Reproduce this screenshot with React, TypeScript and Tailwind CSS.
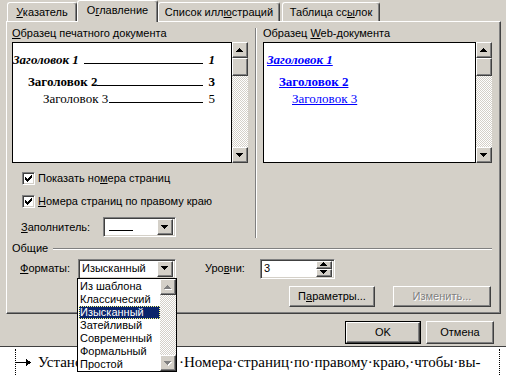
import React from 'react';

// classic win2k bevels
const raised =
  'bg-[#d4d0c8] border border-t-white border-l-white border-b-[#404040] border-r-[#404040] shadow-[inset_-1px_-1px_#808080]';
const sunken =
  'bg-white border border-t-[#808080] border-l-[#808080] border-b-white border-r-white shadow-[inset_1px_1px_#404040,inset_-1px_-1px_#d4d0c8]';
const checker = 'bg-[repeating-conic-gradient(#ffffff_0_25%,#d4d0c8_0_50%)] bg-size-[2px_2px]';

function Arrow({ dir, disabled }: { dir: 'up' | 'down'; disabled?: boolean }) {
  const rows = dir === 'up' ? [[3, 1], [2, 3], [1, 5], [0, 7]] : [[0, 7], [1, 5], [2, 3], [3, 1]];
  const fill = disabled ? '#808080' : '#000000';
  return (
    <svg width="8" height="5" viewBox="0 0 8 5" shapeRendering="crispEdges">
      {disabled &&
        rows.map(([x, w], i) => <rect key={'s' + i} x={x + 1} y={i + 1} width={w} height={1} fill="#ffffff" />)}
      {rows.map(([x, w], i) => (
        <rect key={i} x={x} y={i} width={w} height={1} fill={fill} />
      ))}
    </svg>
  );
}

function ScrollBtn({ dir, disabled, h = 'h-[16px]' }: { dir: 'up' | 'down'; disabled?: boolean; h?: string }) {
  return (
    <div className={`${raised} ${h} w-full flex items-center justify-center shrink-0`}>
      <Arrow dir={dir} disabled={disabled} />
    </div>
  );
}

function Scrollbar({ thumb, disabled }: { thumb?: boolean; disabled?: boolean }) {
  return (
    <div className="w-[16px] h-full flex flex-col">
      <ScrollBtn dir="up" disabled={disabled} />
      {thumb && <div className={`${raised} h-[18px] w-full shrink-0`} />}
      <div className={`flex-1 ${checker}`} />
      <ScrollBtn dir="down" disabled={disabled} />
    </div>
  );
}

function Check() {
  return (
    <div className={`${sunken} w-[13px] h-[13px] flex items-center justify-center shrink-0`}>
      <svg width="7" height="7" viewBox="0 0 7 7" shapeRendering="crispEdges">
        <path d="M0 2h1v3h-1zM1 3h1v3h-1zM2 4h1v3h-1zM3 3h1v3h-1zM4 2h1v3h-1zM5 1h1v3h-1zM6 0h1v3h-1z" fill="#000" />
      </svg>
    </div>
  );
}

function Combo({ w, children }: { w: string; children: React.ReactNode }) {
  return (
    <div className={`${sunken} ${w} h-[20px] flex items-center p-[2px]`}>
      <div className="flex-1 pl-[1px] overflow-hidden whitespace-nowrap">{children}</div>
      <div className={`${raised} w-[16px] h-[16px] flex items-center justify-center`}>
        <Arrow dir="down" />
      </div>
    </div>
  );
}

function Tab({ label, active, w }: { label: React.ReactNode; active?: boolean; w: string }) {
  return (
    <div
      className={`${w} flex items-center justify-center border-t border-l border-white border-r border-r-[#404040] shadow-[inset_-1px_0_#808080] rounded-t-[3px] bg-[#d4d0c8] ${
        active ? 'h-[22px] -mb-px relative z-10' : 'h-[19px]'
      }`}
    >
      <span className={active ? 'pb-[2px]' : ''}>{label}</span>
    </div>
  );
}

function TocRow({
  text,
  num,
  cls,
  pl,
  leader,
}: {
  text: string;
  num: string;
  cls: string;
  pl: string;
  leader: string;
}) {
  return (
    <div className={`flex items-end ${pl} pr-[16px] ${cls}`}>
      <span className="whitespace-nowrap">{text}</span>
      <span className={`flex-1 border-b border-black mb-[3px] ${leader}`} />
      <span className="pl-[6px]">{num}</span>
    </div>
  );
}

const items = ['Из шаблона', 'Классический', 'Изысканный', 'Затейливый', 'Современный', 'Формальный', 'Простой'];

export default function App() {
  return (
    <div className="relative w-[506px] h-[375px] overflow-hidden bg-white text-black text-[11px] leading-[13px] font-['Liberation_Sans',Arial,sans-serif]">
      {/* Dialog */}
      <div className="h-[347px] bg-[#d4d0c8] border-b border-[#404040] pl-[6px]">
        {/* Tabs */}
        <div className="flex items-end h-[21px] pl-[1px]">
          <Tab w="w-[70px]" label={<><u>У</u>казатель</>} />
          <Tab w="w-[81px]" active label={<>О<u>г</u>лавление</>} />
          <Tab w="w-[122px]" label={<>Список илл<u>ю</u>страций</>} />
          <div className="w-[2px]" />
          <Tab w="w-[98px]" label={<>Таблица сс<u>ы</u>лок</>} />
        </div>

        {/* Panel */}
        <div className="w-[495px] h-[293px] border border-t-white border-l-white border-r-[#404040] border-b-[#404040] shadow-[inset_-1px_-1px_#808080] pl-[5px] pt-[5px]">
          <div className="flex h-[211px]">
            {/* print preview */}
            <div className="w-[237px] flex flex-col">
              <div className="h-[13px]">
                <u>О</u>бразец печатного документа
              </div>
              <div className="flex h-[121px] mt-[2px]">
                <div className="w-[220px] h-full border border-black bg-white pt-[9px] font-['Liberation_Serif','Times_New_Roman',serif] text-[13px] leading-[15px]">
                  <TocRow text="Заголовок 1" num="1" cls="font-bold italic" pl="pl-0" leader="ml-[5px]" />
                  <TocRow text="Заголовок 2" num="3" cls="font-bold mt-[7px]" pl="pl-[15px]" leader="ml-0" />
                  <TocRow text="Заголовок 3" num="5" cls="mt-[2px]" pl="pl-[30px]" leader="ml-[1px]" />
                </div>
                <Scrollbar thumb />
              </div>
              <div className="flex items-center gap-[3px] pl-[10px] mt-[9px]">
                <Check />
                <span>
                  Показать но<u>м</u>ера страниц
                </span>
              </div>
              <div className="flex items-center gap-[3px] pl-[10px] mt-[10px]">
                <Check />
                <span>
                  <u>Н</u>омера страниц по правому краю
                </span>
              </div>
              <div className="flex items-center pl-[9px] mt-[9px]">
                <span className="w-[82px]">
                  <u>З</u>аполнитель:
                </span>
                <Combo w="w-[73px]">
                  <div className="w-[24px] border-b border-black mt-[6px] ml-[2px]" />
                </Combo>
              </div>
            </div>

            {/* separator */}
            <div className="w-[2px] ml-[6px] mt-[1px] border-l border-[#808080] border-r border-r-white" />

            {/* web preview */}
            <div className="w-[229px] ml-[6px] flex flex-col">
              <div className="h-[13px]">
                Образец <u>W</u>eb-документа
              </div>
              <div className="flex h-[121px] mt-[2px]">
                <div className="w-[213px] h-full border border-black bg-white pt-[9px] pl-[3px] font-['Liberation_Serif','Times_New_Roman',serif] text-[13px] leading-[15px] text-[#0000ff] flex flex-col items-start">
                  <span className="font-bold italic underline">Заголовок 1</span>
                  <span className="font-bold underline ml-[12px] mt-[7px]">Заголовок 2</span>
                  <span className="underline ml-[25px] mt-[2px]">Заголовок 3</span>
                </div>
                <Scrollbar thumb />
              </div>
            </div>
          </div>

          {/* Общие */}
          <div className="flex items-center h-[13px] mt-[4px] w-[480px]">
            <span>Общие</span>
            <div className="flex-1 ml-[5px] h-[2px] border-t border-[#808080] border-b border-b-white" />
          </div>
          <div className="flex items-center h-[21px] mt-[3px]">
            <span className="w-[66px] pl-[8px]">
              <u>Ф</u>орматы:
            </span>
            <Combo w="w-[98px]">Изысканный</Combo>
            <span className="ml-[29px] w-[55px]">
              Уро<u>в</u>ни:
            </span>
            <div className={`${sunken} w-[75px] h-[20px] flex items-center p-[2px]`}>
              <span className="flex-1 pl-[1px]">3</span>
              <div className="w-[16px] h-[16px] flex flex-col">
                <div className={`${raised} h-[8px] flex items-center justify-center`}>
                  <Arrow dir="up" />
                </div>
                <div className={`${raised} h-[8px] flex items-center justify-center`}>
                  <Arrow dir="down" />
                </div>
              </div>
            </div>
          </div>
          <div className="flex h-[21px] mt-[7px] pl-[277px] gap-[18px]">
            <div className={`${raised} w-[86px] flex items-center justify-center`}>
              П<u>а</u>раметры...
            </div>
            <div className={`${raised} w-[98px] flex items-center justify-center text-[#808080] [text-shadow:1px_1px_#ffffff]`}>
              Изменить...
            </div>
          </div>
        </div>

        {/* OK / Cancel */}
        <div className="flex gap-[5px] pl-[339px] mt-[7px]">
          <div className="w-[76px] h-[23px] border border-black">
            <div className={`${raised} w-full h-full flex items-center justify-center`}>OK</div>
          </div>
          <div className={`${raised} w-[68px] h-[23px] flex items-center justify-center`}>Отмена</div>
        </div>
      </div>

      {/* Document line behind the dialog */}
      <div className="flex h-[28px] items-center pt-[2px] font-['Liberation_Serif','Times_New_Roman',serif] text-[15px] leading-[18px] whitespace-nowrap">
        <div className="w-[15px]" />
        <div className="w-px self-stretch border-l border-dotted border-black" />
        <svg width="22" height="9" viewBox="0 0 22 9" className="shrink-0" shapeRendering="crispEdges">
          <rect x="0" y="4" width="11" height="1" fill="#000" />
          <path d="M10 1 L15 4.5 L10 8 Z" fill="#000" />
        </svg>
        <span className="w-[141px] overflow-hidden">Установите·флажок</span>
        <span className="w-[320px] overflow-hidden">·Номера·страниц·по·правому·краю,·чтобы·вы-</span>
        <div className="w-px self-stretch border-l border-dotted border-black" />
      </div>

      {/* Open dropdown list of Форматы */}
      <div className="absolute left-[77px] top-[278px] w-[100px] h-[94px] border border-black bg-white flex">
        <div className="flex-1 pt-px pl-px">
          {items.map((it) => (
            <div
              key={it}
              className={`h-[13px] leading-[13px] pl-[1px] ${
                it === 'Изысканный' ? 'bg-[#0a246a] text-white outline-1 outline-dotted outline-[#ffff80] -outline-offset-1' : ''
              }`}
            >
              {it}
            </div>
          ))}
        </div>
        <Scrollbar disabled />
      </div>
    </div>
  );
}
